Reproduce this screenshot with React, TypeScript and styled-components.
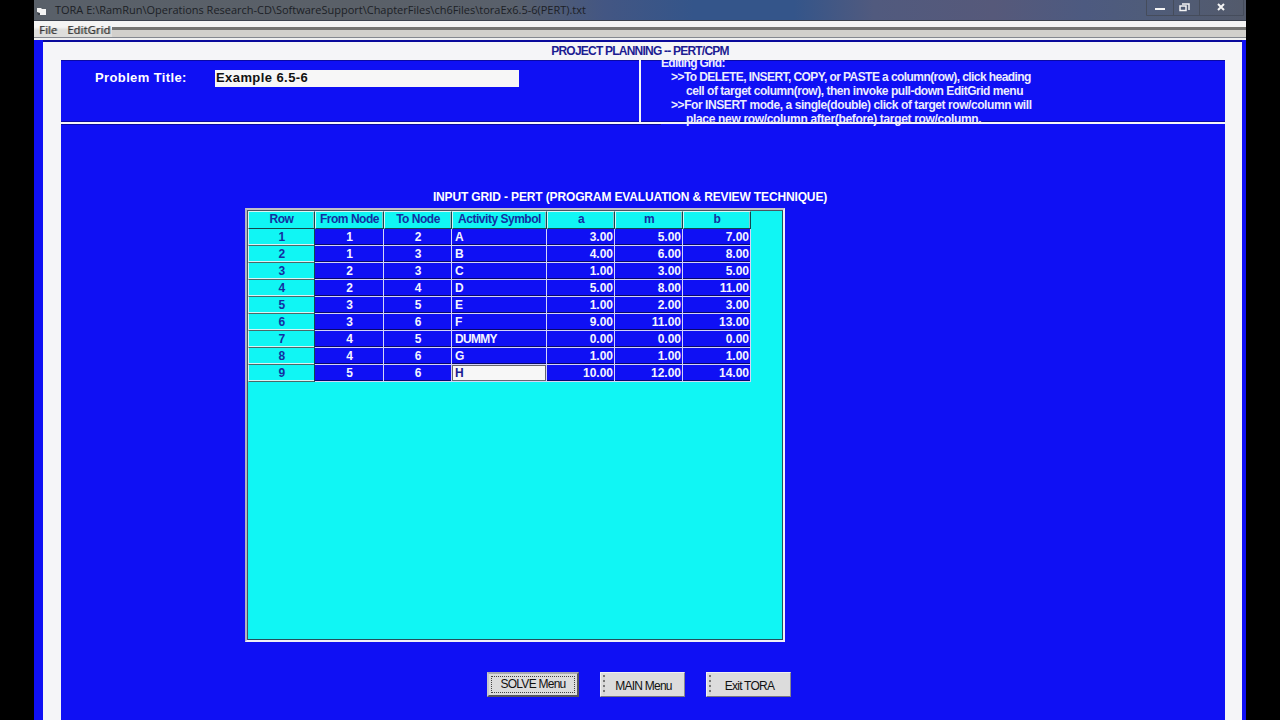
import React from "react";
import styled, { createGlobalStyle } from "styled-components";

const Global = createGlobalStyle`
  * { box-sizing: border-box; }
  body { margin: 0; background: #000; font-family: "Liberation Sans", Arial, sans-serif; }
`;

const Screen = styled.div`
  width: 1280px;
  height: 720px;
  padding: 0 34px;
  background: #000;
  overflow: hidden;
`;

const Window = styled.div`
  height: 720px;
  display: flex;
  flex-direction: column;
  background: #0f10f4;
`;

const TitleBar = styled.header`
  height: 21px;
  flex: none;
  display: flex;
  align-items: flex-start;
  padding: 0 2px 0 2px;
  border-bottom: 1px solid #3c424e;
  background: linear-gradient(90deg, #596069 0, #5a6068 330px, #59606b 480px, #435683 570px, #34558a 660px, #34558a 760px, #515a7e 840px, #56597a 960px, #4d5a80 1050px, #4f5c7a 1110px, #535a6b 100%);
`;

const AppIcon = styled.svg`
  margin-top: 7px;
  flex: none;
`;

const Caption = styled.span`
  margin-left: 8px;
  margin-top: 2px;
  font: 11px/15px "Open Sans", sans-serif;
  letter-spacing: -0.01px;
  color: #1c2026;
  white-space: pre;
  flex: 1;
`;

const WindowButtons = styled.svg`
  flex: none;
`;

const MenuBar = styled.nav`
  height: 19px;
  flex: none;
  display: flex;
  background: linear-gradient(#f4f4f4 0 6px, #747472 6px 9px, #d2d0cc 9px 16px, #85888f 16px 17px, #f0f0f0 17px);
`;

const MenuItems = styled.div`
  height: 16px;
  display: flex;
  gap: 10px;
  padding: 2px 2px 0 5px;
  background: linear-gradient(#f4f4f4 0 6px, #dededc 9px 16px);
`;

const MenuItem = styled.span`
  font: 11px/14px "Open Sans", sans-serif;
  letter-spacing: 0.2px;
  color: #333;
  text-shadow: 1px 0 #888;
`;

const Client = styled.main`
  flex: 1;
  margin: 2px 4px 0 9px;
  padding: 0 17px 0 18px;
  display: flex;
  flex-direction: column;
  background: #f5f5f8;
  box-shadow: 0 -2px #0a0a9c;
`;

const Heading = styled.h1`
  margin: 0;
  height: 18px;
  flex: none;
  padding: 1px 6px 0 0;
  text-align: center;
  font-size: 12px;
  line-height: 16px;
  letter-spacing: -0.78px;
  color: #1c1c92;
`;

const InfoRow = styled.section`
  height: 62px;
  flex: none;
  display: flex;
  gap: 2px;
  margin-bottom: 2px;
`;

const TitlePane = styled.div`
  width: 578px;
  padding: 10px 0 0 34px;
  display: flex;
  align-items: flex-start;
  background: #0f10f4;
  box-shadow: inset 0 1px #0909a4, inset 0 -1px #0909a4;
`;

const FieldLabel = styled.label`
  width: 120px;
  font: bold 13px/16px "Liberation Sans", sans-serif;
  letter-spacing: 0.38px;
  color: #fff;
`;

const TitleField = styled.div`
  width: 304px;
  height: 17px;
  padding-left: 1px;
  background: #f7f7f7;
  color: #111;
  font: bold 13px/16px "Liberation Sans", sans-serif;
  letter-spacing: 0.42px;
`;

const HelpPane = styled.div`
  flex: 1;
  height: 66px;
  padding-left: 20px;
  background: linear-gradient(#0909a4 0 1px, #0f10f4 1px 61px, #0909a4 61px 62px, transparent 62px);
  overflow: hidden;
  position: relative;
`;

const HelpLine = styled.div<{ $indent?: number; $spacing: number }>`
  height: 14px;
  padding-left: ${(p) => p.$indent ?? 0}px;
  font: bold 12px/14px "Liberation Sans", sans-serif;
  letter-spacing: ${(p) => p.$spacing}px;
  color: #ececff;
  white-space: pre;
  &:first-child { margin-top: -4px; }
`;

const Workspace = styled.section`
  flex: 1;
  display: flex;
  flex-direction: column;
  padding: 66px 0 0 184px;
  background: linear-gradient(#0909a4 0 1px, transparent 1px) 0 0 / 600px 100% no-repeat #0f10f4;
`;

const GridTitle = styled.h2`
  margin: 0 0 3px;
  width: 770px;
  height: 15px;
  font-size: 12px;
  line-height: 15px;
  letter-spacing: -0.14px;
  text-align: center;
  color: #fff;
`;

const GridFrame = styled.div`
  width: 540px;
  height: 434px;
  border: 2px solid #f0f0f6;
  border-left-color: #b4b4c0;
  border-top-color: #c0c0c8;
  background: #10f6f4;
  box-shadow: inset 1px 1px #4a5560, inset -1px -1px #24505c;
  padding: 1px;
`;

const Columns = "67px 69px 68px 95px 68px 68px 68px";

const GridRow = styled.div<{ $head?: boolean }>`
  display: grid;
  width: 503px;
  grid-template-columns: ${Columns};
  height: ${(p) => (p.$head ? 18 : 17)}px;
`;

const HeadCell = styled.div`
  border-left: 1px solid #d8f4f4;
  border-top: 1px solid #d8f4f4;
  border-right: 1px solid #14464e;
  border-bottom: 1px solid #14464e;
  background: #10f6f4;
  color: #1430a0;
  font: bold 12px/15px "Liberation Sans", sans-serif;
  letter-spacing: -0.48px;
  text-align: center;
  white-space: nowrap;
  box-shadow: inset -1px 0 #8cc4c8;
`;

const RowHead = styled(HeadCell)`
  border-top: none;
  border-bottom: 1px solid #4a6868;
  box-shadow: inset 0 -1px #d8f4f4;
  line-height: 16px;
`;

const Cell = styled.div<{ $align: string; $active?: boolean }>`
  border-right: 1px solid #d4d4f8;
  border-bottom: 1px solid #d4d4f8;
  background: ${(p) => (p.$active ? "#f7f7f7" : "#0f10f4")};
  box-shadow: ${(p) => (p.$active ? "inset 0 0 0 1px #66666e" : "inset 0 -1px #08086c")};
  color: ${(p) => (p.$active ? "#1c1c92" : "#f4f4ff")};
  text-align: ${(p) => p.$align};
  padding: 0 ${(p) => (p.$align === "center" ? 2 : 1)}px 0 3px;
  font: bold 12px/16px "Liberation Sans", sans-serif;
  letter-spacing: ${(p) => (p.$align === "left" ? -0.7 : 0)}px;
  overflow: hidden;
`;

const Actions = styled.footer`
  display: flex;
  gap: 21px;
  margin: 30px 0 0 242px;
`;

const Button = styled.button<{ $width: number; $focused?: boolean }>`
  width: ${(p) => p.$width}px;
  height: 25px;
  padding: ${(p) => (p.$focused ? "0 0 1px" : "2px 0 0 2px")};
  border: ${(p) => (p.$focused ? 2 : 1)}px solid;
  border-color: ${(p) => (p.$focused ? "#a8a8b0 #55555f #55555f #c8c8c8" : "#f0f0f0 #88888e #77777e #f0f0f0")};
  border-radius: 0;
  outline: ${(p) => (p.$focused ? "1px dotted #444" : "none")};
  outline-offset: -5px;
  background: ${(p) =>
    p.$focused ? "#dcdcdc" : "repeating-linear-gradient(#777 0 2px, #d4d4d4 2px 5px) 2px 2px / 2px 20px no-repeat #dcdcdc"};
  color: #111;
  font: 12px/14px "Liberation Sans", sans-serif;
  letter-spacing: -0.75px;
  white-space: nowrap;
`;

const headings = ["Row", "From Node", "To Node", "Activity Symbol", "a", "m", "b"];

const activities = [
  ["1", "2", "A", "3.00", "5.00", "7.00"],
  ["1", "3", "B", "4.00", "6.00", "8.00"],
  ["2", "3", "C", "1.00", "3.00", "5.00"],
  ["2", "4", "D", "5.00", "8.00", "11.00"],
  ["3", "5", "E", "1.00", "2.00", "3.00"],
  ["3", "6", "F", "9.00", "11.00", "13.00"],
  ["4", "5", "DUMMY", "0.00", "0.00", "0.00"],
  ["4", "6", "G", "1.00", "1.00", "1.00"],
  ["5", "6", "H", "10.00", "12.00", "14.00"],
];

const helpLines = [
  { text: "Editing Grid:", indent: 0, spacing: -0.69 },
  { text: ">>To DELETE, INSERT, COPY, or PASTE a column(row), click heading", indent: 10, spacing: -0.57 },
  { text: "cell of target column(row), then invoke pull-down EditGrid menu", indent: 25, spacing: -0.46 },
  { text: ">>For INSERT mode, a single(double) click of target row/column will", indent: 10, spacing: -0.43 },
  { text: "place new row/column after(before) target row/column.", indent: 25, spacing: -0.33 },
];

const alignOf = (column: number) => (column < 2 ? "center" : column === 2 ? "left" : "right");

export default function App() {
  return (
    <Screen>
      <Global />
      <Window>
        <TitleBar>
          <AppIcon width="11" height="10" viewBox="0 0 11 10">
            <path d="M1 1h4l1 1h4v6H4L1 5z" fill="#f4f4f4" />
            <path d="M1 5l3 1v2H2z" fill="#3c424a" />
          </AppIcon>
          <Caption>TORA E:\RamRun\Operations Research-CD\SoftwareSupport\ChapterFiles\ch6Files\toraEx6.5-6(PERT).txt</Caption>
          <WindowButtons width="98" height="20" viewBox="0 0 98 20">
            <path d="M.5 0v15.500h97V0M27.500 0v15M53.500 0v15" fill="none" stroke="#454c5b" />
            <path d="M9 9h10" stroke="#f4f4f4" strokeWidth="2" />
            <path d="M36 4h7v6M34 6h6v4.500h-6z" fill="none" stroke="#f4f4f4" strokeWidth="1.500" />
            <path d="M72 4l6 6M78 4l-6 6" stroke="#f4f4f4" strokeWidth="2" />
          </WindowButtons>
        </TitleBar>
        <MenuBar>
          <MenuItems>
            <MenuItem>File</MenuItem>
            <MenuItem>EditGrid</MenuItem>
          </MenuItems>
        </MenuBar>
        <Client>
          <Heading>PROJECT PLANNING -- PERT/CPM</Heading>
          <InfoRow>
            <TitlePane>
              <FieldLabel>Problem Title:</FieldLabel>
              <TitleField>Example 6.5-6</TitleField>
            </TitlePane>
            <HelpPane>
              {helpLines.map((line) => (
                <HelpLine key={line.text} $indent={line.indent} $spacing={line.spacing}>
                  {line.text}
                </HelpLine>
              ))}
            </HelpPane>
          </InfoRow>
          <Workspace>
            <GridTitle>INPUT GRID - PERT (PROGRAM EVALUATION &amp; REVIEW TECHNIQUE)</GridTitle>
            <GridFrame>
              <GridRow $head>
                {headings.map((h) => (
                  <HeadCell key={h}>{h}</HeadCell>
                ))}
              </GridRow>
              {activities.map((values, r) => (
                <GridRow key={r}>
                  <RowHead>{r + 1}</RowHead>
                  {values.map((v, c) => (
                    <Cell key={c} $align={alignOf(c)} $active={r === 8 && c === 2}>
                      {v}
                    </Cell>
                  ))}
                </GridRow>
              ))}
            </GridFrame>
            <Actions>
              <Button $width={92} $focused>SOLVE Menu</Button>
              <Button $width={85}>MAIN Menu</Button>
              <Button $width={85}>Exit TORA</Button>
            </Actions>
          </Workspace>
        </Client>
      </Window>
    </Screen>
  );
}
